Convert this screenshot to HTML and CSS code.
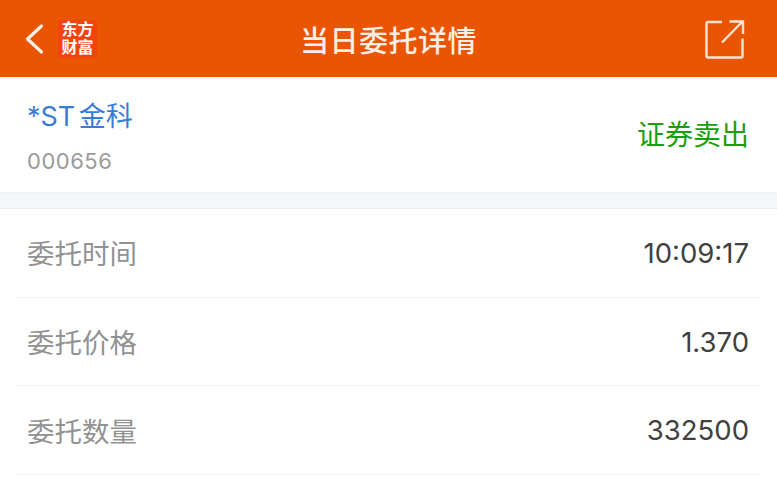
FILE: index.html
```html
<!DOCTYPE html>
<html lang="zh-CN">
<head>
    <meta charset="UTF-8">
    <meta name="viewport" content="width=device-width, initial-scale=1.0">
    <title>当日委托详情</title>
    <link rel="stylesheet" href="styles.css">
</head>
<body>
    <div class="header">
        <div class="header-left">
            <svg class="back-icon" width="20" height="32" viewBox="0 0 20 32">
                <path d="M17.500 3 L3.500 16 L17.500 29" fill="none" stroke="#fdf1e9" stroke-width="3.200" stroke-linecap="round" stroke-linejoin="round"/>
            </svg>
            <div class="logo">东方<br>财富</div>
        </div>
        <h1 class="title">当日委托详情</h1>
        <svg class="share-icon" width="40" height="40" viewBox="0 0 40 40">
            <path d="M17 3 H3 a1.500 1.500 0 0 0 -1.500 1.500 V37 a1.500 1.500 0 0 0 1.500 1.500 H36 a1.500 1.500 0 0 0 1.500 -1.500 V19.500" fill="none" stroke="#fbe3d3" stroke-width="2.400"/>
            <path d="M17 23.500 L37 3 M24.500 2.500 H38 V15" fill="none" stroke="#fbe3d3" stroke-width="2.400"/>
        </svg>
    </div>

    <div class="stock">
        <div class="stock-info">
            <div class="stock-name">*ST 金科</div>
            <div class="stock-code">000656</div>
        </div>
        <div class="stock-action">证券卖出</div>
    </div>

    <div class="divider"></div>

    <div class="detail-list">
        <div class="detail-row">
            <span class="detail-label">委托时间</span>
            <span class="detail-value">10:09:17</span>
        </div>
        <div class="detail-row">
            <span class="detail-label">委托价格</span>
            <span class="detail-value">1.370</span>
        </div>
        <div class="detail-row">
            <span class="detail-label">委托数量</span>
            <span class="detail-value">332500</span>
        </div>
    </div>
</body>
</html>
```

FILE: styles.css
```css
:root {
    --brand-color: #ea5504;
    --logo-color: #f5430f;
    --link-color: #3a7bd5;
    --sell-color: #1a9e0f;
    --label-color: #929292;
    --value-color: #404040;
    --line-color: #f4f4f4;
    --band-color: #f5f6f8;
}

html, body {
    height: 500px;
    overflow: hidden;
}

body {
    margin: 0;
    background-color: #ffffff;
    font-family: Inter, "Noto Sans CJK SC", sans-serif;
}

.header {
    height: 77px;
    background: var(--brand-color);
    display: flex;
    align-items: center;
    justify-content: space-between;
    padding: 0 32px 0 24px;
    position: relative;
}

.header-left {
    display: flex;
    align-items: center;
    gap: 14px;
}

.logo {
    width: 39px;
    height: 38px;
    background: var(--logo-color);
    color: #ffffff;
    font-family: "Liberation Sans", "Noto Sans CJK SC", sans-serif;
    font-size: 16px;
    font-weight: 700;
    line-height: 18px;
    text-align: center;
    padding-top: 1px;
    box-sizing: border-box;
}

.title {
    position: absolute;
    left: 0;
    right: 0;
    margin: 0;
    text-align: center;
    color: #fbeee6;
    font-size: 29px;
    font-weight: 500;
    letter-spacing: 0.500px;
}

.stock {
    height: 115px;
    padding: 0 28px 0 27px;
    display: flex;
    align-items: center;
    justify-content: space-between;
}

.stock-info {
    padding-top: 4px;
}

.stock-name {
    color: var(--link-color);
    font-size: 27px;
    line-height: 36px;
    word-spacing: -4px;
}

.stock-code {
    color: #9a9a9a;
    font-size: 22px;
    line-height: 26px;
    margin-top: 13px;
    letter-spacing: 0.500px;
}

.stock-action {
    color: var(--sell-color);
    font-size: 28px;
    margin-bottom: 4px;
}

.divider {
    height: 15px;
    background: var(--band-color);
    border-top: 1px solid #f0f1f3;
    border-bottom: 1px solid #eeeeee;
}

.detail-list {
    padding: 0 16px;
}

.detail-row {
    height: 87.700px;
    border-bottom: 1px solid var(--line-color);
    display: flex;
    align-items: center;
    justify-content: space-between;
    padding: 0 12px 0 11px;
}

.detail-label {
    color: var(--label-color);
    font-size: 27.500px;
    margin-bottom: 1px;
}

.detail-value {
    color: var(--value-color);
    font-size: 27.500px;
}
```
